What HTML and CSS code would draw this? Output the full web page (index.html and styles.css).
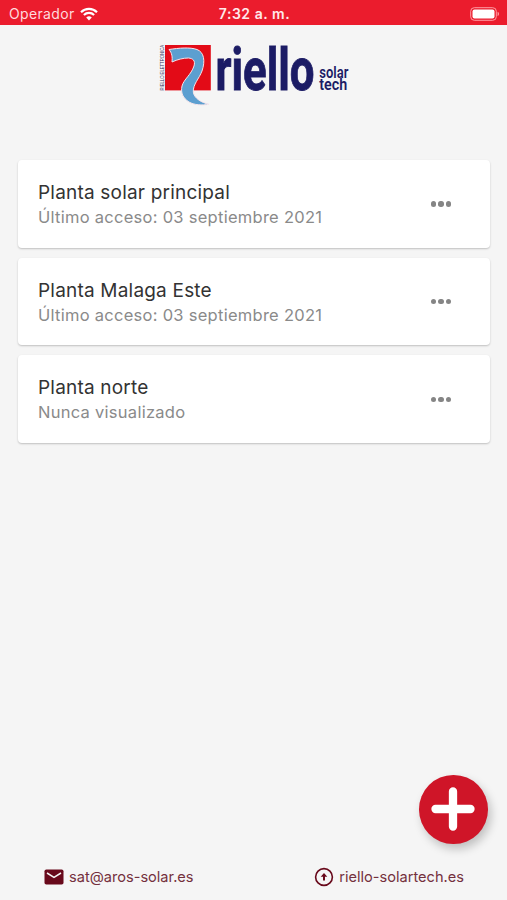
FILE: index.html
```
<!DOCTYPE html>
<html lang="es">
<head>
  <meta charset="utf-8">
  <title>Riello Solartech</title>
  <link rel="stylesheet" href="styles.css">
</head>
<body>
  <div class="status-bar">
    <div class="carrier">
      <span>Operador</span>
      <svg class="wifi" viewBox="0 0 18 14" width="18" height="14">
        <path d="M1 5.2a11.4 11.4 0 0 1 16 0" />
        <path d="M3.9 8a7.3 7.3 0 0 1 10.2 0" />
        <path class="wifi-dot" d="M6.2 10.6a4 4 0 0 1 5.6 0L9 13.6z" />
      </svg>
    </div>
    <div class="clock">7:32 a. m.</div>
    <svg class="battery" viewBox="0 0 30 14" width="30" height="14">
      <rect class="battery-case" x=".7" y=".7" width="25.6" height="12.6" rx="3.6" />
      <rect x="2.5" y="2.5" width="22" height="9" rx="2" fill="#fff" />
      <path d="M27.6 4.8v4.4a2.4 2.4 0 0 0 0-4.4z" fill="#ff9ca3" />
    </svg>
  </div>

  <div class="header">
    <svg class="logo" viewBox="0 0 192 64" width="192" height="64">
      <text class="logo-side" transform="translate(4.6 48.5) rotate(-90)" textLength="45.5" lengthAdjust="spacingAndGlyphs">RIELLO ELETTRONICA</text>
      <rect x="6" y="3" width="45.8" height="45.4" fill="#e30b17" />
      <path class="logo-swoosh" d="M10 7.500C20 6 31 5 38 7.500C45 10 46.500 19 43 29C40 37 34 42 34.300 50C35 56 42 60.500 50 62.300C43 63.500 35 63 30 60C24 56 21.500 51 23 44C25 37 32 33 35 24C36.500 18.500 34 16.500 29.500 16C24 16 18.500 17.500 13 20C13.500 15 13 11 10 7.500Z" />
      <text class="logo-name" x="56.500" y="48" textLength="99" lengthAdjust="spacingAndGlyphs">riello</text>
      <text class="logo-sub" x="160.300" y="36" textLength="29" lengthAdjust="spacingAndGlyphs">solar</text>
      <text class="logo-sub" x="160.300" y="48.400" textLength="28" lengthAdjust="spacingAndGlyphs">tech</text>
    </svg>
  </div>

  <div class="plant-list">
    <div class="plant">
      <div class="plant-info">
        <div class="plant-name">Planta solar principal</div>
        <div class="plant-access">Último acceso: 03 septiembre 2021</div>
      </div>
      <div class="more"><span></span><span></span><span></span></div>
    </div>
    <div class="plant">
      <div class="plant-info">
        <div class="plant-name">Planta Malaga Este</div>
        <div class="plant-access">Último acceso: 03 septiembre 2021</div>
      </div>
      <div class="more"><span></span><span></span><span></span></div>
    </div>
    <div class="plant">
      <div class="plant-info">
        <div class="plant-name">Planta norte</div>
        <div class="plant-access">Nunca visualizado</div>
      </div>
      <div class="more"><span></span><span></span><span></span></div>
    </div>
  </div>

  <div class="add-button">
    <svg viewBox="0 0 44 44" width="44" height="44">
      <path d="M22 4.500v35M4.500 22h35" />
    </svg>
  </div>

  <div class="footer">
    <div class="contact">
      <svg viewBox="0 0 20 16" width="20" height="16">
        <rect x=".5" y=".5" width="19" height="15" rx="1.800" fill="#68091b" />
        <path d="M3 4l7 4.400L17 4" fill="none" stroke="#f5f5f5" stroke-width="1.500" />
      </svg>
      <span>sat@aros-solar.es</span>
    </div>
    <div class="contact">
      <svg viewBox="0 0 20 20" width="20" height="20">
        <circle cx="10" cy="10" r="8.400" fill="none" stroke="#68091b" stroke-width="1.600" />
        <path d="M10 6l3.300 3.800h-2.300v3.600H9V9.800H6.700z" fill="#68091b" />
      </svg>
      <span>riello-solartech.es</span>
    </div>
  </div>
</body>
</html>
```
FILE: styles.css
```
body {
  margin: 0;
  height: 900px;
  display: flex;
  flex-direction: column;
  background-color: #f5f5f5;
  font-family: Inter, 'Liberation Sans', sans-serif;
  overflow: hidden;
}
.status-bar {
  height: 25px;
  box-sizing: border-box;
  padding: 2px 7px 0 9px;
  display: grid;
  grid-template-columns: 1fr auto 1fr;
  align-items: center;
  background-color: #eb1c2d;
  color: #fff;
  font-size: 14px;
}
.carrier {
  display: flex;
  align-items: center;
  gap: 5px;
  color: #ffdadd;
  letter-spacing: 0.35px;
}
.wifi path {
  fill: none;
  stroke: #fff;
  stroke-width: 2.2;
}
.wifi .wifi-dot {
  fill: #fff;
  stroke: none;
}
.clock {
  font-weight: 600;
  letter-spacing: 0.55px;
  color: #ffe9ea;
}
.battery {
  justify-self: end;
}
.battery-case {
  fill: none;
  stroke: #ff9ca3;
  stroke-width: 1;
}
.header {
  height: 135px;
  box-sizing: border-box;
  padding: 17px 0 0 159px;
}
.logo {
  display: block;
  overflow: visible;
}
.logo-side {
  font-family: 'Liberation Sans', sans-serif;
  font-size: 4.5px;
  fill: #34345f;
}
.logo-swoosh {
  fill: #5c9fd0;
  stroke: #f5e4ea;
  stroke-width: 1;
}
.logo-name {
  font-family: Roboto, sans-serif;
  font-size: 59px;
  font-weight: 700;
  fill: #1c1c65;
  stroke: #1c1c65;
  stroke-width: 0.9;
}
.logo-sub {
  font-family: Roboto, sans-serif;
  font-size: 16px;
  font-weight: 600;
  fill: #1c1c65;
}
.plant-list {
  flex: 1;
  display: flex;
  flex-direction: column;
  gap: 10px;
  padding: 0 17px 0 18px;
}
.plant {
  height: 87.7px;
  box-sizing: border-box;
  padding: 0 39px 0 20px;
  display: flex;
  align-items: center;
  justify-content: space-between;
  background-color: #fff;
  border-radius: 4px;
  box-shadow: 0 1px 2px rgba(0, 0, 0, 0.22);
}
.plant-name {
  padding-top: 1px;
  font-size: 19px;
  line-height: 25px;
  letter-spacing: 0.2px;
  color: #333;
}
.plant-access {
  font-size: 16.5px;
  line-height: 24px;
  letter-spacing: 0.27px;
  color: #8a8a8a;
}
.more {
  display: flex;
  gap: 2px;
}
.more span {
  width: 5.4px;
  height: 5.4px;
  border-radius: 50%;
  background-color: #858585;
}
.add-button {
  position: absolute;
  left: 419px;
  top: 775px;
  width: 68.5px;
  height: 68.5px;
  display: flex;
  align-items: center;
  justify-content: center;
  border-radius: 50%;
  background-color: #cf1528;
  box-shadow: 3px 5px 10px rgba(0, 0, 0, 0.22);
}
.add-button path {
  stroke: #fff;
  stroke-width: 8.3;
  stroke-linecap: round;
}
.footer {
  height: 47px;
  padding: 0 43px 0 44px;
  display: flex;
  align-items: center;
  justify-content: space-between;
  font-size: 14.6px;
  color: #74303d;
}
.contact {
  display: flex;
  align-items: center;
  gap: 5px;
}
```
